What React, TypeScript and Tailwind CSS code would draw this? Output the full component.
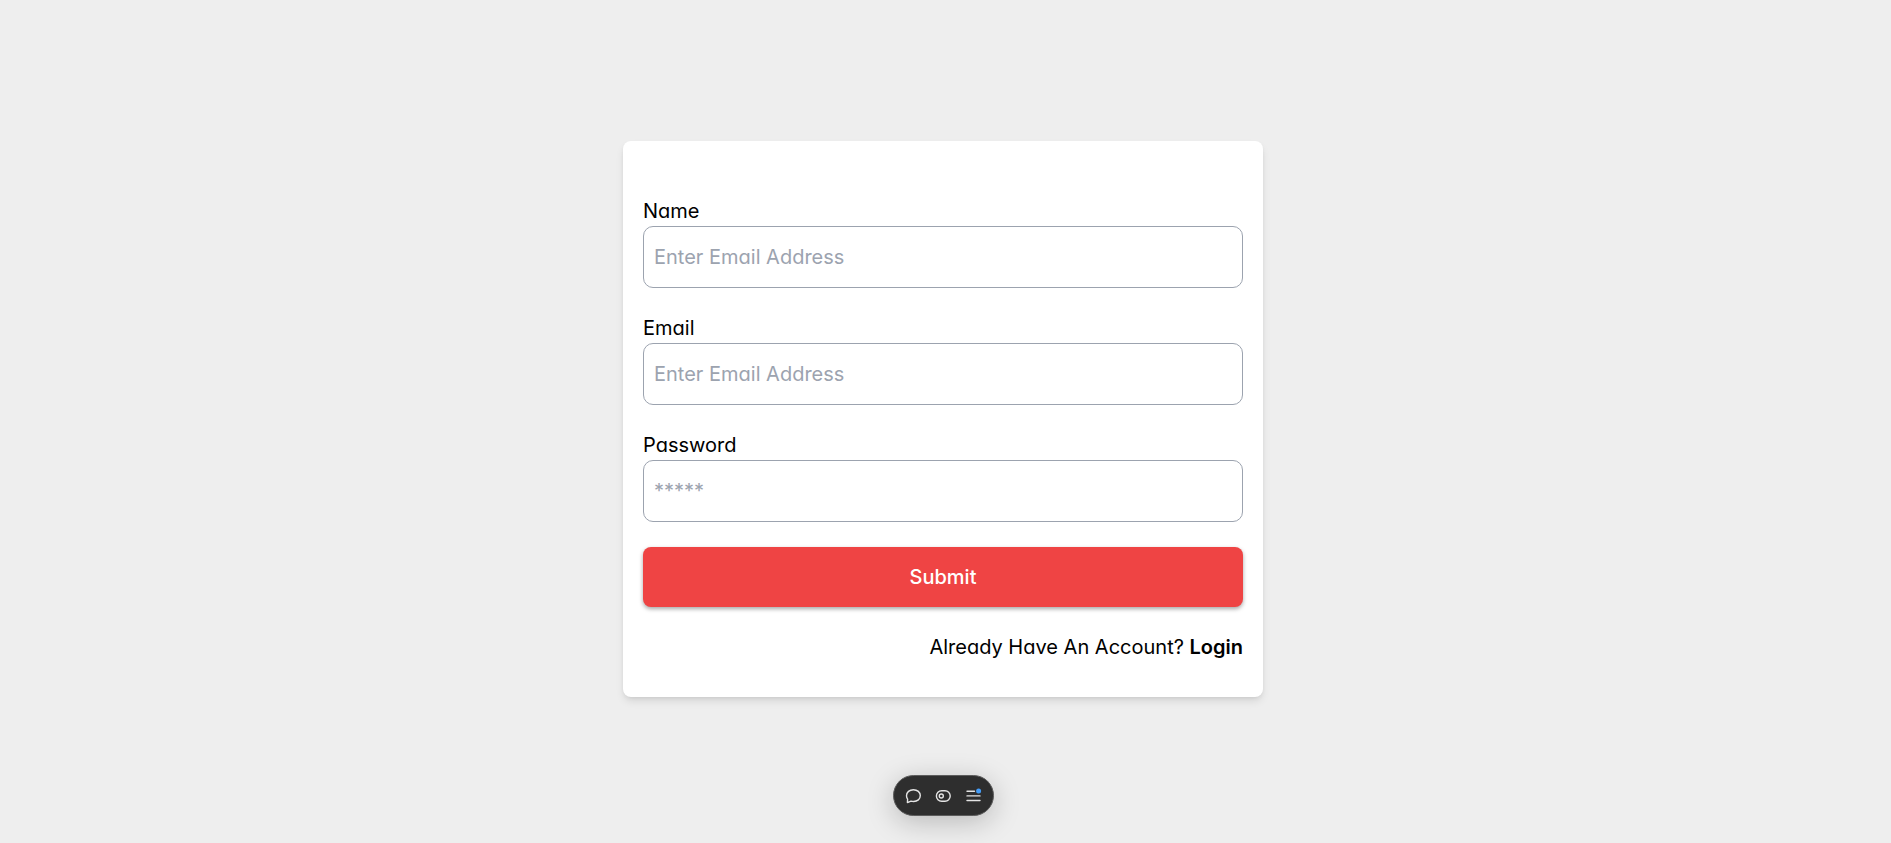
import React from "react";

type FieldProps = {
  id: string;
  label: string;
  type: string;
  placeholder: string;
};

function Field({ id, label, type, placeholder }: FieldProps) {
  return (
    <div className="flex flex-col">
      <label htmlFor={id} className="leading-[30px]">
        {label}
      </label>
      <input
        id={id}
        type={type}
        placeholder={placeholder}
        className="h-[62px] w-full rounded-[10px] border border-[#9ca3af] bg-white px-2.5 placeholder:text-[#9ca3af]"
      />
    </div>
  );
}

function Toolbar() {
  return (
    <div className="flex h-[41px] w-[101px] items-center justify-center gap-2.5 rounded-full border border-[#5c5c5c] bg-[#2e2e2e] text-[#e4e4e4] shadow-[0_6px_28px_rgba(0,0,0,0.22)]">
      <button type="button" aria-label="Comment" className="size-5">
        <svg viewBox="0 0 20 20" fill="none" stroke="currentColor" strokeWidth="1.4" strokeLinejoin="round">
          <path d="M4.4 16.6L4.6 13.2C3.9 12.2 3.5 11 3.5 9.8C3.5 6.2 6.5 3.7 10.4 3.7C14.4 3.7 17.3 6.2 17.3 9.6C17.3 13.1 14.4 15.5 10.6 15.5C9.7 15.5 8.8 15.4 8 15.1Z" />
        </svg>
      </button>
      <button type="button" aria-label="Preview" className="size-5">
        <svg viewBox="0 0 20 20" fill="none" stroke="currentColor" strokeWidth="1.4">
          <rect x="3.4" y="4.8" width="13.8" height="10.4" rx="5.2" />
          <circle cx="8.3" cy="10" r="2" />
        </svg>
      </button>
      <button type="button" aria-label="Menu" className="size-5">
        <svg viewBox="0 0 20 20" fill="none" stroke="currentColor" strokeWidth="1.4" strokeLinecap="round">
          <path d="M4 5.3H11.5M4 9.9H17M4 14.5H17" />
          <circle cx="15.6" cy="5" r="2.5" fill="#459df8" stroke="none" />
        </svg>
      </button>
    </div>
  );
}

export default function App() {
  return (
    <div className="flex min-h-screen flex-col items-center bg-[#eeeeee] pr-[5px] pb-[27px] font-['Inter',sans-serif] text-xl text-black [font-feature-settings:'cv11']">
      <main className="flex w-full flex-1 flex-col items-center justify-center pt-[63px]">
        <form
          onSubmit={(e) => e.preventDefault()}
          className="flex w-full max-w-[640px] flex-col gap-[25px] rounded-lg bg-white px-5 pt-[55px] pb-[35px] shadow-[0_5px_8px_-1px_rgba(0,0,0,0.1),0_2px_5px_-2px_rgba(0,0,0,0.1)]"
        >
          <Field id="name" label="Name" type="text" placeholder="Enter Email Address" />
          <Field id="email" label="Email" type="email" placeholder="Enter Email Address" />
          <Field id="password" label="Password" type="password" placeholder="*****" />
          <button
            type="submit"
            className="h-[60px] w-full rounded-lg bg-[#ef4444] font-medium text-white shadow-[0_2px_4px_rgba(0,0,0,0.35)]"
          >
            Submit
          </button>
          <p className="text-right leading-[30px]">
            Already Have An Account?{" "}
            <a href="#login" className="font-semibold">
              Login
            </a>
          </p>
        </form>
      </main>
      <Toolbar />
    </div>
  );
}
